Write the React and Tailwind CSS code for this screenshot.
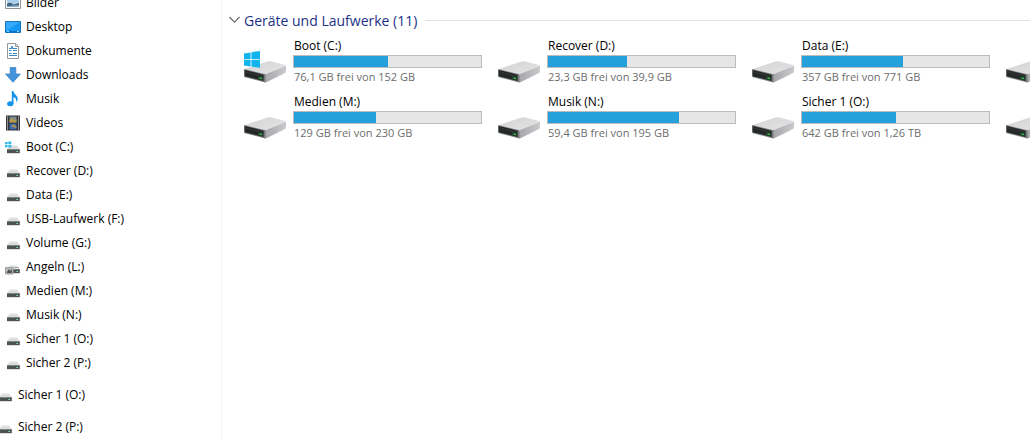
import React from "react";

function WindowsMark() {
  return (
    <g fill="#12b4ee">
      <path d="M0 3.4 6.6 2.4V9H0z" />
      <path d="M7.4 2.2 16 1V9H7.4z" />
      <path d="M0 9.8H6.6V16.4L0 15.4z" />
      <path d="M7.4 9.8H16V17.8L7.4 16.6z" />
    </g>
  );
}

function LargeDrive({ system }) {
  return (
    <svg viewBox="0 0 42 34" className="h-[34px] w-[42px] shrink-0" aria-hidden="true">
      <defs>
        <linearGradient id="lid" x1="0" y1="0" x2="1" y2="1">
          <stop offset="0" stopColor="#d2d2d2" />
          <stop offset="1" stopColor="#e6e6e8" />
        </linearGradient>
        <linearGradient id="side" x1="0" y1="0" x2="1" y2="0">
          <stop offset="0" stopColor="#a6a6a9" />
          <stop offset="1" stopColor="#cacace" />
        </linearGradient>
      </defs>
      <path d="M0 19.3 23.5 11.6Q25.5 11 27.5 11.5L41 15Q42 15.4 42 16.4L22 25.5z" fill="url(#lid)" />
      <path d="M21 24.6 42 16V21.6Q42 22.4 41 22.9L23.5 31.8Q22 32.6 20.5 32.4z" fill="url(#side)" />
      <path d="M0 19 21.5 24.3V32.5L1 27.3Q0 27 0 26z" fill="#77797b" />
      <path d="M.8 20 19.6 24.8V31L.8 26.2z" fill="#242827" />
      <path d="M1.6 21.5 18 25.7V26.6L1.6 22.4z" fill="#363a39" />
      <path d="M14.2 26.4 18.6 27.5V29.9L14.2 28.8z" fill="#155b2c" />
      <path d="M15.8 27.5 17.8 28V29L15.8 28.5z" fill="#65dc67" />
      {system && <WindowsMark />}
    </svg>
  );
}

function SmallDrive({ kind }) {
  return (
    <svg viewBox="0 0 16 16" className="size-4 shrink-0" aria-hidden="true">
      <path d="M4.6 6.4H12.2L14.6 10.5H2.2z" fill="#dcdedd" />
      <path d="M2 10H14.8V14H2z" fill="#4b5351" />
      <path d="M2 10H14.8V11H2z" fill="#7b8381" />
      <path d="M2 14H14.8V14.6H2z" fill="#c7c9c8" />
      <path d="M11.4 12H13V13H11.4z" fill="#7df0ad" />
      {kind === "system" && (
        <path d="M0 3H2.6V5.2H0zM3.3 2.6H6.3V5.2H3.3zM0 6H2.6V8.2H0zM3.3 6H6.3V8.6H3.3z" fill="#2fb9e8" />
      )}
      {kind === "picture" && (
        <>
          <path d="M.5 8.5H8V15H.5z" fill="#b9bbb9" stroke="#9da19f" />
          <path d="M2 13 4 10 5.2 12 6.8 10V14H2z" fill="#4c504e" />
          <path d="M9 8.5H14" stroke="#b0b5b2" />
        </>
      )}
    </svg>
  );
}

function FolderIcon({ kind }) {
  return (
    <svg viewBox="0 0 16 16" className="size-4 shrink-0" aria-hidden="true">
      {kind === "pictures" && (
        <>
          <path d="M.5 1.5H15.5V13.5H.5z" fill="#f8f9fa" stroke="#8f9499" />
          <path d="M2 3H14V12H2z" fill="#a9d0ec" />
          <path d="M2 9C5 6 7 9 9 9.5L14 8V12H2z" fill="#41617c" />
          <path d="M2 11 14 10V12H2z" fill="#86a9c5" />
        </>
      )}
      {kind === "desktop" && (
        <>
          <path d="M.5 2.5H15.5V13.5H.5z" fill="#1598f5" stroke="#1575b8" />
          <path d="M1 3H15L1 12z" fill="#35a9fb" />
          <path d="M1 12.5H15" stroke="#0b6fc0" />
          <path d="M2 12.5H4M12 12.5H14" stroke="#9bd9ff" />
        </>
      )}
      {kind === "documents" && (
        <>
          <path d="M2.5.5H10.5L13.5 3.5V15.5H2.5z" fill="#fff" stroke="#92979b" />
          <path d="M10.5.5V3.5H13.5" fill="none" stroke="#92979b" />
          <path d="M4 5.5H7M8 5.5H12M4 7.5H6.5M8 7.5H12M4 10.5H7M8 10.5H12M4 12.5H12" stroke="#3f8ac5" />
          <path d="M6 3H8V6H6z" fill="#5b9bcf" />
        </>
      )}
      {kind === "downloads" && (
        <path d="M5.2.5H10.8V7H15.4L8 15.3.6 7H5.2z" fill="#4293dc" stroke="#3179bd" strokeWidth=".7" />
      )}
      {kind === "music" && (
        <>
          <ellipse cx="5.3" cy="12.8" rx="3.2" ry="2.5" fill="#1593eb" />
          <path d="M6.8 0H8.5C8.7 3.5 13.2 4.6 12.7 8.4 12.5 9.6 11.9 10.5 11.3 11 11.7 8.4 10.5 6.6 8.5 6V13H6.8z" fill="#1593eb" />
        </>
      )}
      {kind === "videos" && (
        <>
          <path d="M1 .5H15V15.5H1z" fill="#292d31" />
          <path d="M4.5 1.5H11.5V7.5H4.5z" fill="#788a94" />
          <path d="M4.5 8.5H11.5V14.5H4.5z" fill="#4268ae" />
          <path d="M4.5 5 7 3 9 5 11.5 4V7.5H4.5zM6 11 9 9.5 11.5 12V13L8 12z" fill="#b59a4c" />
          <path d="M2.5 1.5V15M13.5 1.5V15" stroke="#f2f2f2" strokeWidth="1.2" strokeDasharray="1 1" />
        </>
      )}
    </svg>
  );
}

const folders = [
  { name: "Bilder", kind: "pictures" },
  { name: "Desktop", kind: "desktop" },
  { name: "Dokumente", kind: "documents" },
  { name: "Downloads", kind: "downloads" },
  { name: "Musik", kind: "music" },
  { name: "Videos", kind: "videos" },
];

const volumes = [
  { name: "Boot (C:)", kind: "system" },
  { name: "Recover (D:)" },
  { name: "Data (E:)" },
  { name: "USB-Laufwerk (F:)" },
  { name: "Volume (G:)" },
  { name: "Angeln (L:)", kind: "picture" },
  { name: "Medien (M:)" },
  { name: "Musik (N:)" },
  { name: "Sicher 1 (O:)" },
  { name: "Sicher 2 (P:)" },
];

const pinned = ["Sicher 1 (O:)", "Sicher 2 (P:)"];

const tiles = [
  { name: "Boot (C:)", space: "76,1 GB frei von 152 GB", used: 50, system: true },
  { name: "Recover (D:)", space: "23,3 GB frei von 39,9 GB", used: 42 },
  { name: "Data (E:)", space: "357 GB frei von 771 GB", used: 54 },
  {},
  { name: "Medien (M:)", space: "129 GB frei von 230 GB", used: 44 },
  { name: "Musik (N:)", space: "59,4 GB frei von 195 GB", used: 70 },
  { name: "Sicher 1 (O:)", space: "642 GB frei von 1,26 TB", used: 50 },
  {},
];

function Tile({ tile }) {
  return (
    <a href="#" aria-label={tile.name || "Laufwerk"} className="flex h-14 items-start gap-[7px]">
      <span className="flex pt-3">
        <LargeDrive system={tile.system} />
      </span>
      {tile.name && (
        <span className="block w-[189px]">
          <span className="block h-[17px] pl-px leading-4">{tile.name}</span>
          <span className="block h-[13px] border border-[#bcbcbc] bg-[#e6e6e6]">
            <span className="block h-full bg-[#26a0da]" style={{ width: `${tile.used}%` }} />
          </span>
          <span className="block pl-px text-[11px] leading-[18px] text-[#6d6d6d]">{tile.space}</span>
        </span>
      )}
    </a>
  );
}

export default function App() {
  return (
    <div className="flex h-screen overflow-hidden bg-white font-['Open_Sans','Noto_Sans',sans-serif] text-[12px] text-black">
      <nav aria-label="Ordner" className="-mt-[9px] w-[222px] shrink-0 border-r border-[#f5f5f5]">
        <ul>
          {folders.map((f) => (
            <li key={f.name}>
              <a href="#" className="flex h-6 items-center gap-[5px] pl-[5px]">
                <FolderIcon kind={f.kind} />
                {f.name}
              </a>
            </li>
          ))}
          {volumes.map((v) => (
            <li key={v.name}>
              <a href="#" className="flex h-6 items-center gap-[5px] pl-[5px]">
                <SmallDrive kind={v.kind} />
                {v.name}
              </a>
            </li>
          ))}
        </ul>
        <ul className="-ml-[3px] pt-1">
          {pinned.map((name) => (
            <li key={name}>
              <a href="#" className="flex h-8 items-center gap-[5px]">
                <SmallDrive />
                {name}
              </a>
            </li>
          ))}
        </ul>
      </nav>
      <main className="min-w-0 flex-1 overflow-hidden pt-2">
        <h2 className="flex h-6 items-center gap-2 pl-[7px]">
          <button type="button" className="flex items-center gap-1 text-[14px] text-[#1e3287]">
            <svg viewBox="0 0 11 8" className="h-2 w-[11px]" aria-hidden="true">
              <path d="M.5 1 5.5 6.2 10.5 1" fill="none" stroke="#686868" strokeWidth="1.1" />
            </svg>
            Geräte und Laufwerke (11)
          </button>
          <span className="h-px flex-1 bg-[#e2e2e2]" />
        </h2>
        <div className="grid grid-cols-[repeat(4,254px)] pt-[6px] pl-[22px]">
          {tiles.map((t, i) => (
            <Tile key={i} tile={t} />
          ))}
        </div>
      </main>
    </div>
  );
}
